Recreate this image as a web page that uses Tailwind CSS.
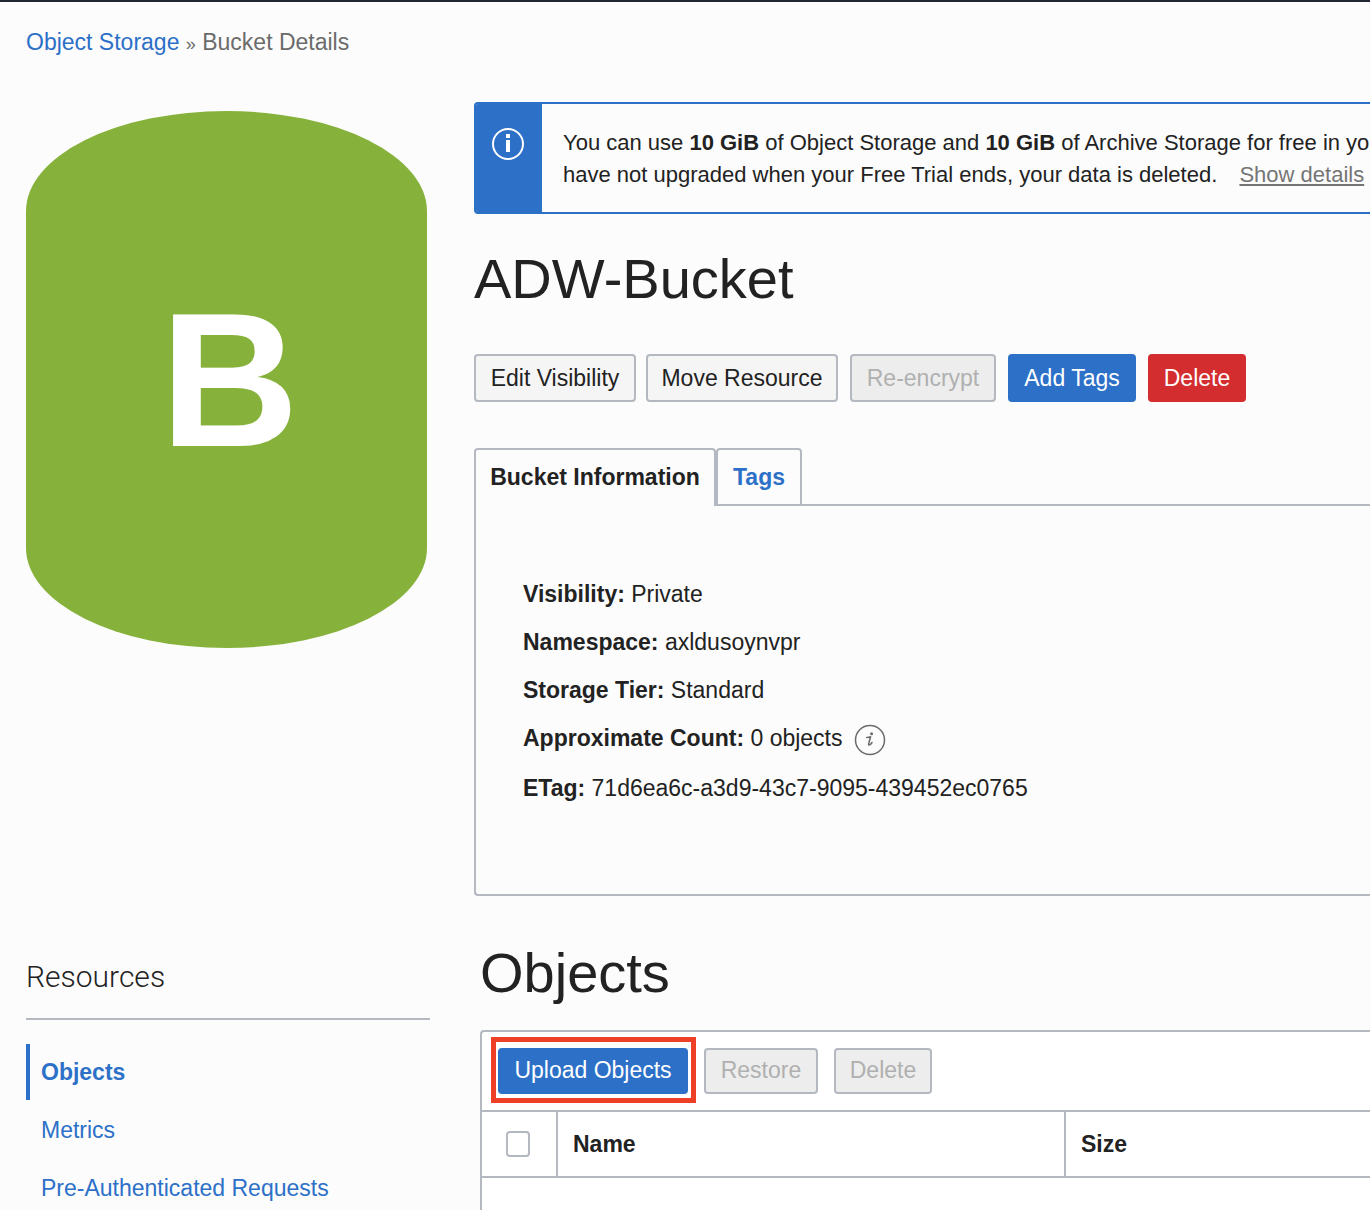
<!DOCTYPE html>
<html lang="en">
<head>
<meta charset="utf-8">
<meta name="viewport" content="width=device-width, initial-scale=1">
<title>Bucket Details</title>
<script src="https://cdn.jsdelivr.net/npm/@tailwindcss/browser@4"></script>
</head>
<body class="flex min-h-screen flex-col overflow-x-hidden border-t-2 border-[#1e2733] bg-[#fcfcfc] font-['Liberation_Sans',Arial,sans-serif] text-[23px] leading-8 text-[#222]">
  <nav aria-label="Breadcrumb" class="px-[26px] pt-6 text-[#6b6b6b]">
    <a href="#" class="text-[#2c70c8]">Object Storage</a> <span class="text-lg">»</span> <span>Bucket Details</span>
  </nav>

  <div class="flex flex-1 gap-11 pl-[26px] pt-11">
    <!-- Left column: bucket badge and resource links -->
    <aside class="w-[404px] shrink-0">
      <div class="mt-[9px] flex h-[537px] w-[401px] items-center justify-center rounded-[50%/100px] bg-[#86b23b] pl-[6px] text-[192px] leading-none font-bold text-white">B</div>
      <h2 class="mt-[311px] border-b-2 border-[#b4b9c1] pb-[23px] font-[Roboto,sans-serif] text-[30px] leading-9 font-light">Resources</h2>
      <ul class="mt-6 flex flex-col gap-[2px]">
        <li><a href="#" aria-current="page" class="block border-l-4 border-[#2c70c8] py-3 pl-[11px] font-bold text-[#2c70c8]">Objects</a></li>
        <li><a href="#" class="block py-3 pl-[15px] text-[#2c70c8]">Metrics</a></li>
        <li><a href="#" class="block pt-3 pl-[15px] text-[#2c70c8]">Pre-Authenticated Requests</a></li>
      </ul>
    </aside>

    <main class="flex min-w-0 flex-1 flex-col">
      <!-- Free tier notice -->
      <section class="flex h-28 overflow-hidden rounded-l-sm border-2 border-r-0 border-[#2c70c8]">
        <div class="flex w-[66px] shrink-0 justify-center bg-[#2c70c8] pt-6 pr-[2px]">
          <svg class="size-8" viewBox="0 0 32 32" fill="none" aria-hidden="true">
            <circle cx="16" cy="16" r="15" stroke="#fff" stroke-width="2"/>
            <path d="M14 6h4v4h-4zM14 12h4v12h-4z" fill="#fff"/>
          </svg>
        </div>
        <p class="pt-[23px] pl-[21px] text-[22px] whitespace-nowrap">You can use <b>10 GiB</b> of Object Storage and <b>10 GiB</b> of Archive Storage for free in your<br>have not upgraded when your Free Trial ends, your data is deleted. <a href="#" class="ml-4 text-[#757575] underline decoration-2 underline-offset-2">Show details</a></p>
      </section>

      <h1 class="mt-8 mb-[2px] text-[56px] leading-[66px]">ADW-Bucket</h1>

      <div class="mt-10 flex h-12 gap-3">
        <button type="button" class="-mr-[2px] w-[162px] rounded border-2 border-[#b4b9c1] bg-[#f5f5f5] whitespace-nowrap">Edit Visibility</button>
        <button type="button" class="w-[192px] rounded border-2 border-[#b4b9c1] bg-[#f5f5f5] whitespace-nowrap">Move Resource</button>
        <button type="button" disabled class="w-[146px] rounded border-2 border-[#b4b9c1] bg-[#ededed] text-[#b0b0b0]">Re-encrypt</button>
        <button type="button" class="w-32 rounded bg-[#2c70c8] text-white">Add Tags</button>
        <button type="button" class="w-[98px] rounded bg-[#d32d2f] text-white">Delete</button>
      </div>

      <!-- Tabs -->
      <div role="tablist" class="mt-[46px] flex h-[58px]">
        <button type="button" role="tab" aria-selected="true" class="w-[242px] rounded-t border-2 border-b-0 border-[#b4b9c1] pb-[2px] font-bold whitespace-nowrap">Bucket Information</button>
        <button type="button" role="tab" aria-selected="false" class="w-[86px] rounded-t border-2 border-[#b4b9c1] font-bold text-[#2c70c8]">Tags</button>
        <div class="flex-1 border-b-2 border-[#b4b9c1]"></div>
      </div>
      <section role="tabpanel" class="flex flex-col gap-4 rounded-bl border-b-2 border-l-2 border-[#b4b9c1] pt-[72px] pb-[90px] pl-[47px]">
        <p><b>Visibility:</b> Private</p>
        <p><b>Namespace:</b> axldusoynvpr</p>
        <p><b>Storage Tier:</b> Standard</p>
        <p class="flex h-[34px] items-start gap-[10px]"><span><b>Approximate Count:</b> 0 objects</span>
          <svg class="size-[34px]" viewBox="0 0 34 34" fill="none" role="img" aria-label="More information">
            <circle cx="17" cy="18" r="14.5" stroke="#6b6b6b" stroke-width="1.5"/>
            <circle cx="18.600" cy="11.800" r="1.500" fill="#6b6b6b"/>
            <path d="M13.800 15.400q2-.1 3.800-.6l-2 7.200c-.3 1.300.8 1.300 1.700.5q1-.9 1.700-2" stroke="#6b6b6b" stroke-width="1.500" stroke-linecap="round" stroke-linejoin="round"/>
          </svg>
        </p>
        <p><b>ETag:</b> 71d6ea6c-a3d9-43c7-9095-439452ec0765</p>
      </section>

      <!-- Object list -->
      <h2 class="mt-11 mb-[2px] pl-[6px] text-[56px] leading-[66px]">Objects</h2>
      <section class="mt-[22px] ml-[6px] flex-1 rounded-tl border-t-2 border-l-2 border-[#b4b9c1] bg-white">
        <div class="flex h-[78px] items-start gap-4 pt-[5px] pl-[9px]">
          <div class="-mr-2 border-[5px] border-[#ee4026] pt-[6px] pr-[3px] pb-1 pl-[2px]">
            <button type="button" class="block h-[46px] w-[190px] rounded bg-[#2c70c8] pb-[2px] whitespace-nowrap text-white">Upload Objects</button>
          </div>
          <button type="button" disabled class="mt-[11px] h-[46px] w-[114px] rounded border-2 border-[#b4b9c1] bg-[#ededed] pb-[2px] text-[#b0b0b0]">Restore</button>
          <button type="button" disabled class="mt-[11px] h-[46px] w-[98px] rounded border-2 border-[#b4b9c1] bg-[#ededed] pb-[2px] text-[#b0b0b0]">Delete</button>
        </div>
        <table class="w-full table-fixed border-collapse text-left">
          <thead>
            <tr class="h-[66px] border-y-2 border-[#b4b9c1]">
              <th scope="col" class="w-[75px] border-r-2 border-[#b4b9c1] pl-6"><input type="checkbox" aria-label="Select all objects" class="block h-[26px] w-6 appearance-none rounded border-2 border-[#b4b9c1] bg-white"></th>
              <th scope="col" class="w-[508px] border-r-2 border-[#b4b9c1] pl-[15px]">Name</th>
              <th scope="col" class="pl-[15px]">Size</th>
            </tr>
          </thead>
        </table>
      </section>
    </main>
  </div>
</body>
</html>
